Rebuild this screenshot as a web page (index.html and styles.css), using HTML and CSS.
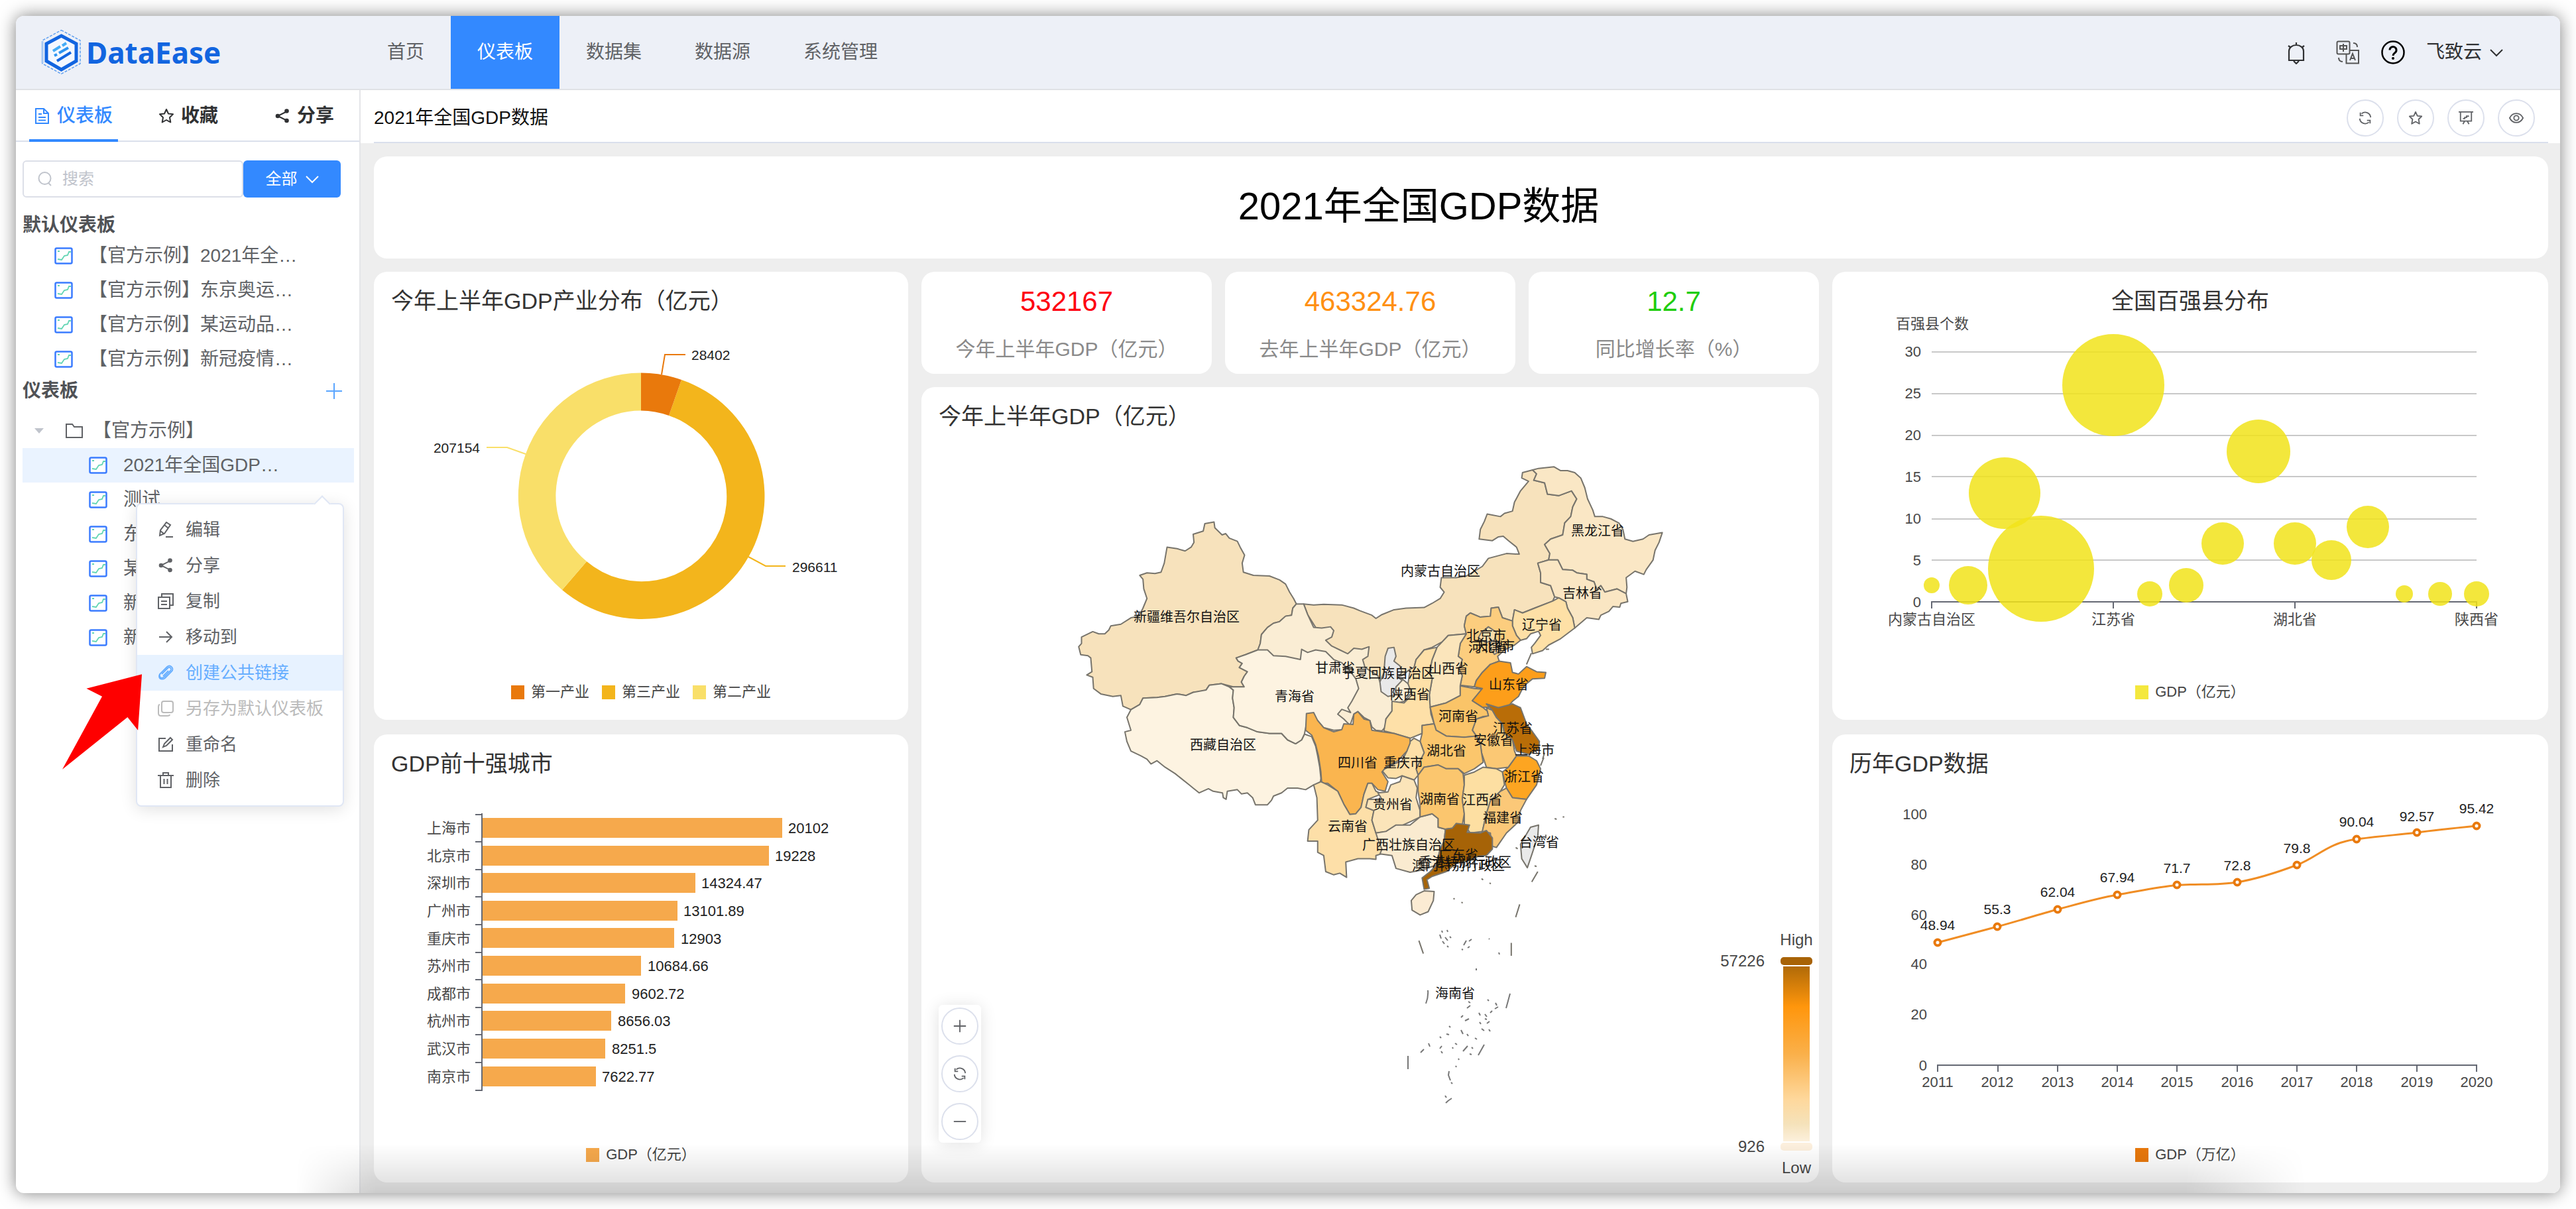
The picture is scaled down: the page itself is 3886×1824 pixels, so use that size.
FILE: index.html
```html
<!DOCTYPE html>
<html lang="zh-CN">
<head>
<meta charset="utf-8">
<title>DataEase - 2021年全国GDP数据</title>
<link rel="stylesheet" href="styles.css">
</head>
<body>
<svg class="sprite" aria-hidden="true">
  <symbol id="i-panel" viewBox="0 0 28 26"><rect x="1.5" y="1.500" width="25" height="23" rx="2" fill="#fff" stroke="#3b7cff" stroke-width="2.500"/><path d="M5 6h3M5 18l6 1 4-6 5-1 2-5h3" fill="none" stroke="#62d5b4" stroke-width="1.800"/></symbol>
  <symbol id="i-refresh" viewBox="0 0 24 24"><path d="M3 13a9 9 0 0 0 15 6M21 11A9 9 0 0 0 6 5M4 3v5h5M20 21v-5h-5" fill="none" stroke="currentColor" stroke-width="2"/></symbol>
  <symbol id="i-star" viewBox="0 0 24 24"><path d="M12 2l3 6.500 7 .8-5 4.900 1.300 7.300L12 18l-6.300 3.500L7 14.200 2 9.300l7-.8z" fill="none" stroke="currentColor" stroke-width="2" stroke-linejoin="round"/></symbol>
  <symbol id="i-share" viewBox="0 0 24 24"><path d="M19 5L5 12l14 7" fill="none" stroke="currentColor" stroke-width="2"/><circle cx="18.500" cy="4.500" r="3.300" fill="currentColor"/><circle cx="5" cy="12" r="3.300" fill="currentColor"/><circle cx="18.500" cy="19" r="3.300" fill="currentColor"/></symbol>
  <symbol id="i-down" viewBox="0 0 20 20"><path d="M1 6l9 9 9-9" fill="none" stroke="currentColor" stroke-width="2"/></symbol>
</svg>

<div class="window">
  <header class="header">
    <a class="logo" href="#" aria-label="DataEase">
      <svg class="logo-mark" viewBox="0 0 60 70">
        <path d="M30.500 1.500L59 17v35L30.500 67.500 2 52V17z" fill="none" stroke="#5f9ff0" stroke-width="1.500" stroke-dasharray="4 2"/>
        <path d="M2 18v33" stroke="#a9c9f2" stroke-width="3"/>
        <path d="M30.500 10L53 22v26L30.500 61 8 48V22z" fill="#f4f8ff" stroke="#1265e0" stroke-width="5"/>
        <g fill="none" stroke-width="4"><path d="M18 33l11-7M32 25l6-4" stroke="#45acf5"/><path d="M20 40l4-2M27 36l14-8" stroke="#2f95f0"/><path d="M24 48l21-13" stroke="#1265e0"/></g>
      </svg>
      <span class="logo-text">DataEase</span>
    </a>
    <nav class="nav">
      <a href="#">首页</a><a href="#" class="on">仪表板</a><a href="#">数据集</a><a href="#">数据源</a><a href="#">系统管理</a>
    </nav>
    <div class="tools">
      <button class="tool bell" aria-label="消息"><svg viewBox="0 0 36 36"><path d="M7 30V16a11 9 0 0 1 22 0v14zM14 31l4 4 4-4M18 6V3M6 8l4 3M30 8l-4 3" fill="none" stroke="#303133" stroke-width="2.200"/></svg></button>
      <button class="tool" aria-label="语言"><svg viewBox="0 0 36 36"><g fill="none" stroke="#555" stroke-width="2"><rect x="1.500" y="1.500" width="19" height="19" rx="2"/><path d="M6 8h10v5H6zM11 5v12M20.500 15H34v19.500H15.500V21M21 30l4-10 4 10M22.500 27h5M26 4c4 0 6 2 6 6M4 26c0 4 2 6 6 6"/></g></svg></button>
      <button class="tool" aria-label="帮助"><svg viewBox="0 0 36 36"><circle cx="18" cy="18" r="16.500" fill="none" stroke="#000" stroke-width="2.500"/><path d="M13 14.500a5 5 0 1 1 8 4c-2 1.500-3 2-3 4.500" fill="none" stroke="#000" stroke-width="3"/><circle cx="18" cy="27" r="2" /></svg></button>
      <button class="user">飞致云<svg viewBox="0 0 20 20"><use href="#i-down"/></svg></button>
    </div>
  </header>

  <div class="body">
    <aside class="side">
      <div class="tabs">
        <button class="tab on"><svg viewBox="0 0 24 24"><path d="M2 1h12l7 7v15H2zM14 1v7h7M6 9h5M6 14h11M6 18.500h11" fill="none" stroke="currentColor" stroke-width="2"/></svg>仪表板</button>
        <button class="tab"><svg><use href="#i-star"/></svg>收藏</button>
        <button class="tab"><svg><use href="#i-share"/></svg>分享</button>
      </div>
      <div class="side-main">
        <div class="search">
          <label class="search-box"><svg viewBox="0 0 24 24"><circle cx="11.500" cy="11" r="9" fill="none" stroke="#c0c4cc" stroke-width="2"/><path d="M17 18l4 4" stroke="#c0c4cc" stroke-width="2"/></svg><input type="text" placeholder="搜索" aria-label="搜索"></label>
          <button class="all">全部<svg viewBox="0 0 20 20"><use href="#i-down"/></svg></button>
        </div>
        <h2 class="group">默认仪表板</h2>
        <ul class="tree">
          <li><svg><use href="#i-panel"/></svg>【官方示例】2021年全…</li>
          <li><svg><use href="#i-panel"/></svg>【官方示例】东京奥运…</li>
          <li><svg><use href="#i-panel"/></svg>【官方示例】某运动品…</li>
          <li><svg><use href="#i-panel"/></svg>【官方示例】新冠疫情…</li>
        </ul>
        <div class="group-row"><h2 class="group">仪表板</h2><button class="add" aria-label="新建"><svg viewBox="0 0 24 24"><path d="M12 0v24M0 12h24" stroke="#5aa5ff" stroke-width="2"/></svg></button></div>
        <ul class="tree sub">
          <li class="folder"><span class="caret"></span><svg viewBox="0 0 28 26"><path d="M2 3h9l3 4h12v16H2z" fill="none" stroke="#606266" stroke-width="2"/></svg>【官方示例】</li>
          <li class="on"><svg><use href="#i-panel"/></svg>2021年全国GDP…</li>
          <li><svg><use href="#i-panel"/></svg>测试</li>
          <li><svg><use href="#i-panel"/></svg>东京奥运</li>
          <li><svg><use href="#i-panel"/></svg>某运动品</li>
          <li><svg><use href="#i-panel"/></svg>新冠疫情</li>
          <li><svg><use href="#i-panel"/></svg>新冠疫情</li>
        </ul>
      </div>
      <div class="menu">
        <button><svg viewBox="0 0 24 24"><path d="M3 21l1-8L13 1l6 4-9 13zM10 5l6 5M4 14l5 4M12 23h11" fill="none" stroke="currentColor" stroke-width="2"/></svg>编辑</button>
        <button><svg><use href="#i-share"/></svg>分享</button>
        <button><svg viewBox="0 0 24 24"><path d="M1 6h17v17H1zM6 6V1h17v17h-5M5 12h9M5 17h9" fill="none" stroke="currentColor" stroke-width="2"/></svg>复制</button>
        <button><svg viewBox="0 0 24 24"><path d="M2 12h18M13 4l8 8-8 8" fill="none" stroke="currentColor" stroke-width="2"/></svg>移动到</button>
        <button class="on"><svg viewBox="0 0 24 24"><path d="M8 17l8-8M6 14L15 5c3-3 7 1 4 4l-9 9c-5 4-9 0-6-5L14 3c5-4 11 2 7 7L11 20c-4 3-9 2-9-3 0-2 1-3 2-4" fill="none" stroke="currentColor" stroke-width="1.800"/></svg>创建公共链接</button>
        <button disabled><svg viewBox="0 0 24 24"><rect x="6" y="1" width="17" height="17" rx="3" fill="none" stroke="currentColor" stroke-width="2"/><path d="M3 6c-2 0-2 2-2 4v9q0 4 4 4h9c2 0 4 0 4-2" fill="none" stroke="currentColor" stroke-width="2"/></svg>另存为默认仪表板</button>
        <button><svg viewBox="0 0 24 24"><path d="M12 3H2v19h20V12M8 16l2-5L19 2l3 3-9 9z" fill="none" stroke="currentColor" stroke-width="2"/></svg>重命名</button>
        <button><svg viewBox="0 0 24 24"><path d="M0 5h24M4 5v18h16V5M8 4V1h8v3M9.500 10v8M14.500 10v8" fill="none" stroke="currentColor" stroke-width="2"/></svg>删除</button>
      </div>
      <svg class="pointer" viewBox="0 0 124 148"><path d="M122 1L116 87 100 67 0 147 61 35 37 23z" fill="#fe0000"/></svg>
    </aside>

    <main class="main">
      <div class="bar">
        <h1>2021年全国GDP数据</h1>
        <div class="bar-tools">
          <button class="round" aria-label="刷新"><svg><use href="#i-refresh"/></svg></button>
          <button class="round" aria-label="收藏"><svg><use href="#i-star"/></svg></button>
          <button class="round" aria-label="预览"><svg viewBox="0 0 24 24"><path d="M0 2h24M3 2v15h18V2M7 22l3-5M17 22l-3-5M7 13h3v-2h3V9h4" fill="none" stroke="currentColor" stroke-width="2"/></svg></button>
          <button class="round" aria-label="查看"><svg viewBox="0 0 24 24"><path d="M1 12c5-10 17-10 22 0-5 10-17 10-22 0z" fill="none" stroke="currentColor" stroke-width="2"/><circle cx="12" cy="12" r="4" fill="none" stroke="currentColor" stroke-width="2"/></svg></button>
        </div>
      </div>

      <div class="canvas">
        <section class="card banner">2021年全国GDP数据</section>
        <div class="grid">
          <div class="col">
            <section class="card">
              <h2>今年上半年GDP产业分布（亿元）</h2>
              <svg class="chart" viewBox="564 476 806 553">
                <path fill="#f3b51c" d="M1028 573A185.500 185.500 0 1 1 848 890L885 847A128.500 128.500 0 1 0 1009 627z"/>
                <path fill="#f9df69" d="M848 890A185.500 185.500 0 0 1 967 562.500V619.500A128.500 128.500 0 0 0 885 847z"/>
                <path fill="#e9790c" d="M967 562.500A185.500 185.500 0 0 1 1028 573L1009 627A128.500 128.500 0 0 0 967 619.500z"/>
                <g fill="none" stroke-width="2"><path stroke="#e9790c" d="M998 565l5-30h31"/><path stroke="#f9df69" d="M793 685l-28-10h-31"/><path stroke="#f3b51c" d="M1129 840l26 14h30"/></g>
                <g class="t21 dark"><text x="1043" y="543">28402</text><text x="724" y="683" text-anchor="end">207154</text><text x="1195" y="863">296611</text></g>
              </svg>
              <div class="legend"><span><i class="c1"></i>第一产业</span><span><i class="c2"></i>第三产业</span><span><i class="c3"></i>第二产业</span></div>
            </section>
            <section class="card">
              <h2>GDP前十强城市</h2>
              <svg class="chart" viewBox="564 1174 806 553">
                <g fill="#f6a94c">
                  <rect x="727" y="1234" width="453" height="30"/><rect x="727" y="1276" width="433" height="30"/><rect x="727" y="1317" width="322" height="30"/><rect x="727" y="1359" width="295" height="30"/><rect x="727" y="1400" width="290" height="30"/><rect x="727" y="1442" width="240" height="30"/><rect x="727" y="1484" width="216" height="30"/><rect x="727" y="1525" width="195" height="30"/><rect x="727" y="1567" width="186" height="30"/><rect x="727" y="1609" width="172" height="30"/>
                </g>
                <path class="axis" d="M727 1227V1646M717 1229h10M717 1270h10M717 1312h10M717 1353h10M717 1395h10M717 1437h10M717 1478h10M717 1520h10M717 1561h10M717 1603h10M717 1645h10"/>
                <g class="t22 mid" text-anchor="end"><text x="710" y="1257">上海市</text><text x="710" y="1299">北京市</text><text x="710" y="1340">深圳市</text><text x="710" y="1382">广州市</text><text x="710" y="1424">重庆市</text><text x="710" y="1465">苏州市</text><text x="710" y="1507">成都市</text><text x="710" y="1548">杭州市</text><text x="710" y="1590">武汉市</text><text x="710" y="1632">南京市</text></g>
                <g class="t22 dark"><text x="1189" y="1257">20102</text><text x="1169" y="1299">19228</text><text x="1058" y="1340">14324.47</text><text x="1031" y="1382">13101.89</text><text x="1027" y="1424">12903</text><text x="977" y="1465">10684.66</text><text x="953" y="1507">9602.72</text><text x="932" y="1548">8656.03</text><text x="923" y="1590">8251.5</text><text x="908" y="1632">7622.77</text></g>
              </svg>
              <div class="legend"><span><i class="c4"></i>GDP（亿元）</span></div>
            </section>
          </div>

          <div class="col mid-col">
            <div class="kpis">
              <section class="card kpi"><b class="red">532167</b><span>今年上半年GDP（亿元）</span></section>
              <section class="card kpi"><b class="orange">463324.76</b><span>去年上半年GDP（亿元）</span></section>
              <section class="card kpi"><b class="green">12.7</b><span>同比增长率（%）</span></section>
            </div>
            <section class="card map-card">
              <h2>今年上半年GDP（亿元）</h2>
              <svg class="chart" viewBox="1390 650 1354 1134">
                <defs><linearGradient id="vm" x1="0" y1="0" x2="0" y2="1"><stop offset="0" stop-color="#b06a08"/><stop offset=".23" stop-color="#ff960c"/><stop offset=".5" stop-color="#fab04a"/><stop offset=".76" stop-color="#fed89c"/><stop offset=".9" stop-color="#f5e2ba"/><stop offset="1" stop-color="#fcf0dc"/></linearGradient></defs>
                <g class="land" transform="translate(1600 680) scale(.6059 .4847)">
                  <path fill="#f7e2bc" d="M605 477L630 480 655 478 700 480 730 490 745 498 775 512 785 522 800 510 830 495 860 490 905 488 925 475 945 460 955 440 945 425 948 395 985 395 1010 390 1030 375 1050 360 1065 335 1110 320 1142 322 1135 300 1115 280 1102 266 1090 268 1075 280 1042 275 1045 245 1055 220 1062 197 1095 205 1105 195 1125 188 1130 160 1145 125 1165 95 1148 85 1150 68 1175 60 1185 72 1178 92 1205 100 1212 135 1240 140 1272 125 1285 150 1275 175 1270 205 1255 225 1250 262 1220 275 1205 292 1218 320 1215 340 1188 350 1195 380 1195 410 1220 420 1230 455 1225 468 1180 490 1150 505 1130 495 1125 530 1100 520 1090 487 1072 490 1070 515 1045 518 1020 505 1010 515 1005 545 1010 570 965 575 950 595 925 612 905 620 885 650 880 675 870 680 850 700 800 720 760 690 750 650 700 640 660 600 615 510z"/>
                  <path fill="#f7e2bc" d="M359 227L382 222 384 240 402 262 411 258 420 272 440 282 447 300 458 325 452 350 455 378 480 388 520 390 545 402 560 415 570 440 580 460 587 477 578 490 575 512 560 515 545 532 530 537 515 550 500 572 497 600 491 620 460 635 437 645 442 655 452 662 445 675 465 688 457 702 450 720 457 735 430 735 400 725 370 730 362 745 345 750 330 752 312 762 290 757 260 765 240 768 205 770 197 790 175 806 155 795 150 762 130 765 100 757 82 740 80 705 65 698 78 688 75 645 68 638 50 635 45 610 52 600 52 580 80 563 95 570 110 570 120 558 125 545 150 540 175 520 195 515 205 490 215 460 207 430 205 400 197 388 215 380 235 382 250 378 258 350 265 300 290 305 310 312 325 300 332 285 330 260 355 250z"/>
                  <path fill="#fdf3e1" d="M205 770L240 768 260 765 290 757 312 762 330 752 362 745 370 730 400 725 420 735 430 745 428 770 432 800 430 830 445 855 465 862 490 875 520 880 550 880 565 900 585 912 600 900 607 882 625 890 635 920 640 950 645 985 648 1020 645 1045 630 1040 610 1055 590 1050 565 1050 550 1065 530 1075 525 1088 515 1102 485 1102 478 1080 465 1065 450 1068 440 1055 415 1060 412 1085 405 1080 403 1065 380 1060 368 1052 345 1065 330 1050 320 1040 300 1020 285 1005 260 985 240 965 225 975 215 960 200 950 175 935 165 905 160 875 175 870 165 830 175 806 197 790z"/>
                  <path fill="#faedd4" d="M587 477L605 477 615 510 630 550 650 552 672 548 680 560 675 580 660 590 675 608 695 620 715 632 730 615 750 618 768 610 765 640 752 650 758 675 790 700 800 740 850 710 865 725 876 750 855 780 825 790 825 810 810 835 808 860 800 872 785 870 775 860 770 840 755 830 740 812 730 820 722 850 700 870 680 860 600 800 560 660 491 620 497 600 500 572 515 550 530 537 545 532 560 515 575 512 578 490z"/>
                  <path fill="#fdf3e1" d="M437 645L460 635 491 620 515 620 530 638 560 640 597 650 600 618 615 628 635 620 660 625 680 650 700 660 720 685 735 710 742 740 725 780 715 800 722 815 700 805 690 820 705 835 717 850 705 868 680 870 655 862 640 840 620 818 612 850 607 882 600 900 585 912 565 900 550 880 520 880 490 875 465 862 445 855 430 830 432 800 428 770 430 745 420 735 457 735 450 720 457 702 465 688 445 675 452 662 442 655z"/>
                  <path fill="#fae7c5" d="M1175 60L1190 55 1228 50 1245 62 1262 62 1280 68 1295 85 1305 115 1312 150 1325 185 1330 205 1350 205 1370 212 1390 225 1400 245 1405 275 1425 282 1450 275 1465 262 1498 255 1490 285 1480 310 1475 340 1458 370 1452 385 1430 375 1408 395 1410 425 1408 445 1385 430 1355 440 1345 420 1335 432 1328 408 1310 400 1310 385 1285 380 1275 372 1250 370 1238 340 1215 340 1218 320 1205 292 1220 275 1250 262 1255 225 1270 205 1275 175 1285 150 1272 125 1240 140 1212 135 1205 100 1178 92 1185 72z"/>
                  <path fill="#fae6c3" d="M1188 350L1215 340 1238 340 1250 370 1275 372 1285 380 1310 385 1310 400 1328 408 1335 432 1345 420 1355 440 1385 430 1408 445 1412 470 1395 475 1392 487 1375 485 1365 500 1345 512 1340 525 1310 520 1280 552 1275 520 1262 490 1258 470 1240 458 1230 455 1220 420 1195 410 1195 380z"/>
                  <path fill="#fee0a6" d="M1240 458L1258 470 1262 490 1275 520 1280 552 1245 585 1215 605 1200 622 1175 632 1172 612 1180 600 1195 575 1190 562 1170 570 1160 585 1145 590 1135 575 1125 545 1125 530 1130 495 1150 505 1180 490 1225 468z"/>
                  <path fill="#fccd7e" d="M1010 515L1020 505 1045 518 1070 515 1072 490 1090 487 1100 520 1125 530 1125 545 1135 575 1145 590 1130 605 1105 620 1088 640 1092 655 1070 665 1050 690 1035 715 1030 735 995 730 1000 700 992 680 1000 650 990 640 995 600 1010 570 1005 545z"/>
                  <path fill="#f9dca9" d="M1048 565L1065 548 1085 565 1080 590 1058 597 1040 582zM1072 592L1092 595 1096 622 1080 634 1068 612z"/>
                  <path fill="#fbe5bb" d="M965 575L1010 570 995 600 990 640 1000 650 992 680 1000 700 995 730 995 762 960 785 920 798 918 760 925 710 918 690 925 650 937 612 950 595z"/>
                  <path fill="#fee0a8" d="M937 612L925 650 918 690 925 710 918 760 920 798 922 820 930 850 900 855 900 880 870 895 830 880 805 872 810 835 825 810 825 780 855 785 875 760 865 725 870 680 880 675 885 650 905 620z"/>
                  <path fill="#e9e9e9" d="M815 615L830 612 835 640 830 655 845 670 850 690 840 705 850 715 835 735 832 760 815 765 798 750 795 720 805 690 808 640z"/>
                  <path fill="#fbc874" d="M1060 800L1075 808 1085 830 1100 850 1105 880 1125 900 1130 935 1135 950 1115 985 1085 990 1060 985 1048 940 1045 910 1035 888 1025 870 1035 835 1065 825z"/>
                  <path fill="#fac468" d="M995 762L995 732 1030 740 1050 742 1025 778 1050 798 1062 810 1065 825 1050 828 1035 835 1025 870 1035 888 1005 892 960 888 935 870 930 850 920 798 960 785z"/>
                  <path fill="#fd9e1a" d="M1092 655L1120 660 1125 690 1140 695 1160 672 1185 688 1208 690 1205 708 1175 710 1160 725 1150 740 1140 765 1125 780 1115 795 1090 800 1050 798 1025 778 1050 740 1030 735 1035 715 1050 690 1070 665z"/>
                  <path fill="#b96d08" d="M1060 788L1090 800 1125 788 1145 800 1160 850 1172 870 1192 905 1190 930 1165 945 1135 935 1125 900 1105 880 1100 850 1085 830 1075 808z"/>
                  <path fill="#fbc66c" d="M900 855L930 850 935 870 960 888 1005 892 1035 888 1045 910 1048 940 1052 970 1030 990 1005 1005 990 990 960 990 940 978 905 985 890 1010 885 990 895 965 905 940 895 905 900 880z"/>
                  <path fill="#fee0a8" d="M870 905L880 895 895 905 905 940 895 965 885 990 890 1010 880 1025 850 1012 835 1020 815 1018 800 995 830 975 850 965 862 935z"/>
                  <path fill="#fab54f" d="M612 818L630 815 640 840 655 862 680 875 700 868 705 850 728 852 730 820 740 812 755 835 770 840 775 870 800 875 830 880 870 895 870 910 862 935 840 965 810 985 800 1000 815 1030 808 1060 790 1055 775 1035 765 1035 755 1070 748 1110 735 1130 720 1132 705 1100 690 1060 665 1035 650 1035 648 1000 642 950 635 915 625 885 610 870z"/>
                  <path fill="#fddfa8" d="M630 1040L648 1030 665 1040 690 1060 705 1100 720 1132 735 1130 748 1110 755 1070 765 1035 775 1035 785 1060 800 1068 765 1085 760 1110 780 1120 775 1150 785 1190 795 1200 810 1250 785 1260 785 1272 770 1270 740 1270 710 1280 712 1328 695 1315 680 1320 660 1310 655 1260 640 1250 640 1215 615 1215 618 1180 640 1150 638 1080z"/>
                  <path fill="#fbe4b9" d="M850 1012L880 1025 888 1050 885 1080 895 1120 895 1140 870 1155 835 1175 810 1185 785 1190 775 1150 780 1120 760 1110 765 1085 800 1085 790 1065 815 1062 822 1040 845 1030z"/>
                  <path fill="#faebd0" d="M785 1190L810 1185 835 1165 870 1165 895 1140 925 1130 940 1145 940 1172 958 1178 955 1215 945 1240 935 1290 900 1305 870 1312 835 1300 825 1260 795 1255 800 1240 790 1210z"/>
                  <path fill="#fbc66e" d="M890 1010L905 985 940 978 960 990 990 990 1002 1005 1005 1040 1000 1085 1005 1130 1000 1165 975 1175 958 1178 940 1172 940 1145 925 1130 895 1140 895 1100 890 1060z"/>
                  <path fill="#fddfa2" d="M1005 1010L1030 1000 1052 985 1085 990 1100 1000 1105 1040 1095 1060 1070 1090 1060 1130 1050 1185 1020 1190 1005 1165 1005 1130 1000 1085 1005 1040z"/>
                  <path fill="#fda521" d="M1115 985L1135 950 1165 950 1185 965 1195 990 1185 1040 1160 1085 1125 1080 1110 1050 1100 1000z"/>
                  <path fill="#fbc878" d="M1110 1050L1125 1080 1160 1085 1145 1120 1140 1155 1110 1190 1085 1235 1072 1230 1070 1190 1050 1185 1060 1130 1070 1090 1095 1060z"/>
                  <path fill="#a66307" d="M958 1178L975 1175 985 1160 1018 1165 1012 1188 1045 1190 1060 1182 1075 1205 1075 1240 1060 1260 1040 1262 1020 1275 985 1285 960 1310 925 1325 912 1335 918 1362 905 1365 900 1330 920 1310 935 1290 945 1240 955 1215z"/>
                  <path fill="#fbebd3" d="M885 1382L905 1370 930 1372 928 1400 915 1435 895 1445 875 1430 873 1400z"/>
                  <path fill="#e9e9e9" d="M1170 1172L1190 1165 1188 1200 1175 1250 1162 1298 1148 1270 1145 1225z"/>
                  <path fill="none" d="M1188 1310L1173 1342M1143 1412L1133 1452M1122 1532V1572M892 1525L903 1565M1172 630L1160 665M1208 618h8M1195 980l8-25M1200 960l5-20M1230 1145l5 2M1250 1140h4M1208 1195v12M1133 1235l5 4M1180 1292l5 2M1048 1332l4 4M1068 1345l3 3M978 1393l3 3M998 1405l3 3"/>
                </g>
                <path class="dots" d="M2154 1494q1 10-3 20M2278 1499l-6 22M2239 1576l-9 16M2124 1593v20M2181 1664q4-4 9-7M2175 1404l1 3M2183 1403l1 3M2172 1410l2 6M2180 1414l4 5M2176 1420l3 4M2187 1413l2 2M2183 1427l2 2M2208 1426l4-7M2216 1420l4-3M2214 1430l3-2M2205 1432l2 1M2246 1416l1 1M2261 1437l1 3M2227 1461v3M2244 1508l2 2M2215 1511l3 2M2213 1521l5-4M2255 1522l5-3M2231 1528l2 4M2204 1535l3-3M2210 1540l6-3M2240 1530l3 4M2248 1528l3-3M2232 1542l2 3M2243 1544l4-3M2186 1548l2 2M2235 1552l4 3M2204 1554l3 6M2213 1560l2 3M2182 1560l4 1M2246 1553l2 3M2172 1564l2 2M2225 1566l3 2M2155 1574l2 5M2143 1588l5-5M2172 1582l3-4M2195 1574l3 2M2174 1586l2 3M2191 1580l1 2M2207 1586l7-8M2220 1580l2 2M2217 1590l3 1M2200 1597l1 2M2196 1608l1 2M2186 1616l-1 6 3 8M2189 1633l2 2M2180 1653l2 3M2240 1537l3 1M2256 1513l2 4"/>
                <g class="t20" text-anchor="middle">
                  <text x="1790" y="938">新疆维吾尔自治区</text><text x="1845" y="1131">西藏自治区</text><text x="1953" y="1058">青海省</text><text x="2014" y="1015">甘肃省</text><text x="2094" y="1023">宁夏回族自治区</text><text x="2173" y="869">内蒙古自治区</text><text x="2410" y="808">黑龙江省</text><text x="2387" y="902">吉林省</text><text x="2326" y="950">辽宁省</text><text x="2242" y="966">北京市</text><text x="2255" y="982">天津市</text><text x="2245" y="984">河北省</text><text x="2185" y="1016">山西省</text><text x="2127" y="1055">陕西省</text><text x="2276" y="1040">山东省</text><text x="2200" y="1088">河南省</text><text x="2282" y="1106">江苏省</text><text x="2253" y="1124">安徽省</text><text x="2315" y="1139">上海市</text><text x="2182" y="1140">湖北省</text><text x="2299" y="1179">浙江省</text><text x="2048" y="1158">四川省</text><text x="2117" y="1158">重庆市</text><text x="2101" y="1221">贵州省</text><text x="2172" y="1213">湖南省</text><text x="2236" y="1214">江西省</text><text x="2267" y="1241">福建省</text><text x="2033" y="1254">云南省</text><text x="2125" y="1282">广西壮族自治区</text><text x="2200" y="1297">广东省</text><text x="2210" y="1308">香港特别行政区</text><text x="2200" y="1313">澳门特别行政区</text><text x="2322" y="1278">台湾省</text><text x="2195" y="1506">海南省</text>
                </g>
                <rect x="2690" y="1458" width="40" height="264" fill="url(#vm)"/>
                <rect x="2686" y="1444" width="48" height="12" rx="5" fill="#a86306"/>
                <rect x="2686" y="1724" width="48" height="12" rx="5" fill="#fcefdd"/>
                <g class="t24 mid"><text x="2710" y="1426" text-anchor="middle">High</text><text x="2710" y="1770" text-anchor="middle">Low</text><text x="2662" y="1458" text-anchor="end">57226</text><text x="2662" y="1738" text-anchor="end">926</text></g>
              </svg>
              <div class="zoom">
                <button class="round" aria-label="放大"><svg viewBox="0 0 24 24"><path d="M12 2v20M2 12h20" stroke="currentColor" stroke-width="2"/></svg></button>
                <button class="round" aria-label="重置"><svg><use href="#i-refresh"/></svg></button>
                <button class="round" aria-label="缩小"><svg viewBox="0 0 24 24"><path d="M2 12h20" stroke="currentColor" stroke-width="2"/></svg></button>
              </div>
            </section>
          </div>

          <div class="col">
            <section class="card">
              <h2 class="center">全国百强县分布</h2>
              <svg class="chart" viewBox="2764 476 1080 553">
                <path class="rule" d="M2914 531H3736M2914 594H3736M2914 657H3736M2914 719H3736M2914 783H3736M2914 845H3736"/>
                <path class="axis" d="M2913 908H3737M2914 908v10M3188 908v10M3462 908v10M3736 908v10"/>
                <g fill="#f1e31a" fill-opacity=".85"><circle cx="2914" cy="883" r="12"/><circle cx="2969" cy="883" r="29"/><circle cx="3024" cy="744" r="54"/><circle cx="3079" cy="858" r="80"/><circle cx="3188" cy="581" r="77"/><circle cx="3243" cy="896" r="19"/><circle cx="3298" cy="883" r="26"/><circle cx="3353" cy="820" r="32"/><circle cx="3407" cy="681" r="48"/><circle cx="3462" cy="820" r="32"/><circle cx="3517" cy="845" r="30"/><circle cx="3572" cy="795" r="32"/><circle cx="3627" cy="896" r="13"/><circle cx="3681" cy="896" r="18"/><circle cx="3736" cy="896" r="19"/></g>
                <g class="t22 mid" text-anchor="end"><text x="2898" y="538">30</text><text x="2898" y="601">25</text><text x="2898" y="664">20</text><text x="2898" y="727">15</text><text x="2898" y="790">10</text><text x="2898" y="853">5</text><text x="2898" y="916">0</text></g>
                <g class="t22 mid" text-anchor="middle"><text x="2915" y="496">百强县个数</text><text x="2914" y="942">内蒙古自治区</text><text x="3188" y="942">江苏省</text><text x="3462" y="942">湖北省</text><text x="3736" y="942">陕西省</text></g>
              </svg>
              <div class="legend"><span><i class="c5"></i>GDP（亿元）</span></div>
            </section>
            <section class="card">
              <h2>历年GDP数据</h2>
              <svg class="chart" viewBox="2764 1174 1080 553">
                <path class="axis" d="M2922 1607H3737M2923 1607v10M3014 1607v10M3104 1607v10M3194 1607v10M3284 1607v10M3375 1607v10M3465 1607v10M3555 1607v10M3646 1607v10M3736 1607v10"/>
                <g class="t22 mid" text-anchor="end"><text x="2907" y="1236">100</text><text x="2907" y="1312">80</text><text x="2907" y="1388">60</text><text x="2907" y="1462">40</text><text x="2907" y="1538">20</text><text x="2907" y="1615">0</text></g>
                <g class="t22 mid" text-anchor="middle"><text x="2923" y="1640">2011</text><text x="3013" y="1640">2012</text><text x="3104" y="1640">2013</text><text x="3194" y="1640">2014</text><text x="3284" y="1640">2015</text><text x="3375" y="1640">2016</text><text x="3465" y="1640">2017</text><text x="3555" y="1640">2018</text><text x="3646" y="1640">2019</text><text x="3736" y="1640">2020</text></g>
                <path fill="none" stroke="#f08d24" stroke-width="3" d="M2923 1422C2953 1414 2983 1406 3013 1398S3074 1380 3104 1372 3164 1355 3194 1350 3254 1338 3284 1335.500 3345 1336 3375 1331 3433 1317 3465 1305 3510 1272 3555 1266 3616 1260 3646 1256 3706 1249 3736 1246"/>
                <g fill="#fff" stroke="#e9790c" stroke-width="4"><circle cx="2923" cy="1422" r="4.500"/><circle cx="3013" cy="1398" r="4.500"/><circle cx="3104" cy="1372" r="4.500"/><circle cx="3194" cy="1350" r="4.500"/><circle cx="3284" cy="1335" r="4.500"/><circle cx="3375" cy="1331" r="4.500"/><circle cx="3465" cy="1305" r="4.500"/><circle cx="3555" cy="1266" r="4.500"/><circle cx="3646" cy="1256" r="4.500"/><circle cx="3736" cy="1246" r="4.500"/></g>
                <g class="t21 dark" text-anchor="middle"><text x="2923" y="1403">48.94</text><text x="3013" y="1379">55.3</text><text x="3104" y="1353">62.04</text><text x="3194" y="1331">67.94</text><text x="3284" y="1317">71.7</text><text x="3375" y="1313">72.8</text><text x="3465" y="1287">79.8</text><text x="3555" y="1247">90.04</text><text x="3646" y="1239">92.57</text><text x="3736" y="1227">95.42</text></g>
              </svg>
              <div class="legend"><span><i class="c1"></i>GDP（万亿）</span></div>
            </section>
          </div>
        </div>
      </div>
    </main>
  </div>
</div>
</body>
</html>
```
FILE: styles.css
```css
* { box-sizing: border-box; }
body {
  margin: 0;
  padding: 24px;
  background: #fff;
  color: #606266;
  font: 28px/40px "Liberation Sans", "Noto Sans CJK SC", sans-serif;
}
h1, h2, ul { margin: 0; padding: 0; font-size: inherit; font-weight: 400; }
ul { list-style: none; }
a { color: inherit; text-decoration: none; }
button { margin: 0; padding: 0; border: 0; background: none; color: inherit; font: inherit; cursor: pointer; }
svg { flex: none; }
.sprite { display: none; }

.window {
  position: relative;
  display: flex;
  flex-direction: column;
  min-height: calc(100vh - 48px);
  border-radius: 12px;
  background: #fff;
  overflow: hidden;
  box-shadow: 0 0 26px rgba(0, 0, 0, .5);
}
/* soft shade along the bottom edge */
.window::after {
  content: "";
  position: absolute;
  inset: auto 10% 0 11%;
  height: 74px;
  background: linear-gradient(to bottom, transparent, rgba(0, 0, 0, .14));
  -webkit-mask-image: linear-gradient(to right, transparent, #000 4%, #000 94%, transparent);
  mask-image: linear-gradient(to right, transparent, #000 4%, #000 94%, transparent);
  pointer-events: none;
}

.header { display: flex; height: 112px; border-bottom: 2px solid #e0e2e6; background: #edf0f7; }
.logo { display: flex; align-items: center; gap: 8px; width: 520px; padding-left: 38px; }
.logo-mark { width: 60px; height: 70px; }
.logo-text { color: #1265e0; font: 700 44px/60px "Noto Sans", "Open Sans", sans-serif; }
.nav { display: flex; }
.nav a { display: flex; align-items: center; padding: 0 40px; }
.nav a.on { background: #3389ff; color: #fff; }
.tools { display: flex; align-items: center; gap: 32px; margin-left: auto; padding-right: 86px; }
.tool, .tool svg { display: block; width: 36px; height: 36px; }
.bell { margin-right: 10px; }
.user { display: flex; align-items: center; gap: 12px; color: #303133; }
.user svg { width: 20px; height: 20px; }

.body { display: flex; flex: 1; }
.side { position: relative; flex: none; width: 520px; border-right: 2px solid #e4e5e8; }
.tabs { display: flex; gap: 53px; height: 78px; padding: 0 30px 0 20px; border-bottom: 2px solid #dbe0ec; }
.tab { display: flex; align-items: center; gap: 10px; height: 78px; padding: 0 8px; color: #303133; font-weight: 700; }
.tab svg { width: 24px; height: 24px; }
.tab:last-child { margin-left: auto; }
.tab.on { padding-top: 4px; border-bottom: 4px solid #3389ff; color: #3389ff; font-weight: 500; }
.side-main { padding: 28px 8px 0 10px; }
.search { display: flex; margin: 0 20px 22px 0; }
.search-box { display: flex; flex: 1; align-items: center; gap: 14px; height: 56px; padding: 0 20px; border: 2px solid #dcdfe8; border-radius: 6px; }
.search-box svg { width: 24px; height: 24px; }
.search-box input { width: 100%; min-width: 0; padding: 0; border: 0; outline: 0; font: 24px/32px "Liberation Sans", "Noto Sans CJK SC", sans-serif; }
.search-box input::placeholder { color: #bfc3cb; }
.all { display: flex; align-items: center; justify-content: center; gap: 12px; width: 147px; border-radius: 6px; background: #3389ff; color: #fff; font-size: 24px; }
.all svg { width: 20px; height: 20px; }
.group { color: #505256; font-weight: 700; }
.group-row { display: flex; align-items: center; justify-content: space-between; height: 44px; margin-bottom: 12px; padding-right: 18px; }
.add svg { display: block; width: 24px; height: 24px; }
.tree li { display: flex; align-items: center; gap: 24px; height: 52px; padding-left: 48px; white-space: nowrap; }
.tree svg { width: 28px; height: 26px; }
.tree.sub li { padding-left: 100px; }
.tree.sub .folder { gap: 14px; padding-left: 18px; }
.tree li.on { background: #eaf3ff; }
.caret { width: 14px; margin-right: 18px; border: 7px solid transparent; border-top: 8px solid #c0c4cc; border-bottom: 0; }

.menu {
  position: absolute;
  top: 623px;
  left: 181px;
  width: 314px;
  padding: 11px 0;
  border: 2px solid #e0e7f5;
  border-radius: 8px;
  background: #fff;
  box-shadow: 0 4px 24px rgba(0, 0, 0, .12);
}
.menu::before {
  content: "";
  position: absolute;
  top: -10px;
  right: 22px;
  width: 16px;
  height: 16px;
  border: solid #e0e7f5;
  border-width: 2px 0 0 2px;
  background: #fff;
  transform: rotate(45deg);
}
.menu button { position: relative; display: flex; align-items: center; gap: 18px; width: 100%; height: 54px; padding-left: 31px; font-size: 26px; }
.menu svg { width: 24px; height: 24px; }
.menu .on { background: #e7f2ff; color: #66aeff; }
.menu button:disabled { color: #bbb; }
.pointer { position: absolute; top: 880px; left: 70px; width: 122px; height: 146px; }

.main { flex: 1; min-width: 0; background: #fff; }
.bar { display: flex; align-items: center; justify-content: space-between; height: 80px; margin: 0 18px 0 20px; padding: 6px 20px 0 0; border-bottom: 2px solid #d9dfec; }
.bar h1 { color: #111; }
.bar-tools { display: flex; gap: 20px; }
.round { display: flex; align-items: center; justify-content: center; width: 56px; height: 56px; border: 2px solid #dce0ec; border-radius: 50%; background: #fff; }
.round svg { width: 22px; height: 22px; }
.canvas { padding: 20px 18px 16px 20px; background: #eee; }
.card { border-radius: 20px; background: #fff; }
.card h2 { padding: 22px 26px 0; color: #333; font-size: 34px; line-height: 44px; }
.card h2.center { text-align: center; }
.banner { margin-bottom: 20px; padding: 0 128px 4px 0; color: #000; font-size: 58px; line-height: 150px; text-align: center; }
.grid { display: grid; grid-template-columns: 806fr 1354fr 1080fr; gap: 20px; }
.col { display: flex; flex-direction: column; gap: 22px; }
.mid-col { gap: 20px; }
.kpis { display: grid; grid-template-columns: repeat(3, 1fr); gap: 20px; }
.kpi { display: flex; flex-direction: column; gap: 30px; align-items: center; padding: 22px 0 18px; color: #8a8a8a; font-size: 30px; line-height: 38px; }
.kpi b { font-size: 42px; font-weight: 400; line-height: 46px; }
.red { color: #fe0011; }
.orange { color: #ff9013; }
.green { color: #1fcd0e; }
.chart { display: block; width: 100%; height: auto; }
.legend { display: flex; justify-content: center; gap: 19px; padding-bottom: 27px; color: #444; font-size: 22px; line-height: 30px; }
.legend span { display: flex; align-items: center; gap: 10px; }
.legend i { width: 20px; height: 21px; }
.c1 { background: #e9790c; }
.c2 { background: #f3b51c; }
.c3 { background: #f9df69; }
.c4 { background: #f6a94c; }
.c5 { background: #f4e83e; }
.t20 { fill: #111; font-size: 20px; }
.t21 { font-size: 21px; }
.t22 { font-size: 22px; }
.t24 { font-size: 24px; }
.dark { fill: #222; }
.mid { fill: #484848; }
.axis { fill: none; stroke: #646873; stroke-width: 2; }
.rule { fill: none; stroke: #c8c8c8; stroke-width: 2; }
.land path { stroke: #77746c; stroke-width: 2; stroke-linejoin: round; vector-effect: non-scaling-stroke; }
.dots { fill: none; stroke: #777; stroke-width: 2; }
.map-card { position: relative; }
.zoom { position: absolute; bottom: 60px; left: 26px; display: flex; flex-direction: column; gap: 16px; padding: 4px; border-radius: 6px; background: #fff; box-shadow: 0 2px 24px rgba(0, 0, 0, .12); }
```
